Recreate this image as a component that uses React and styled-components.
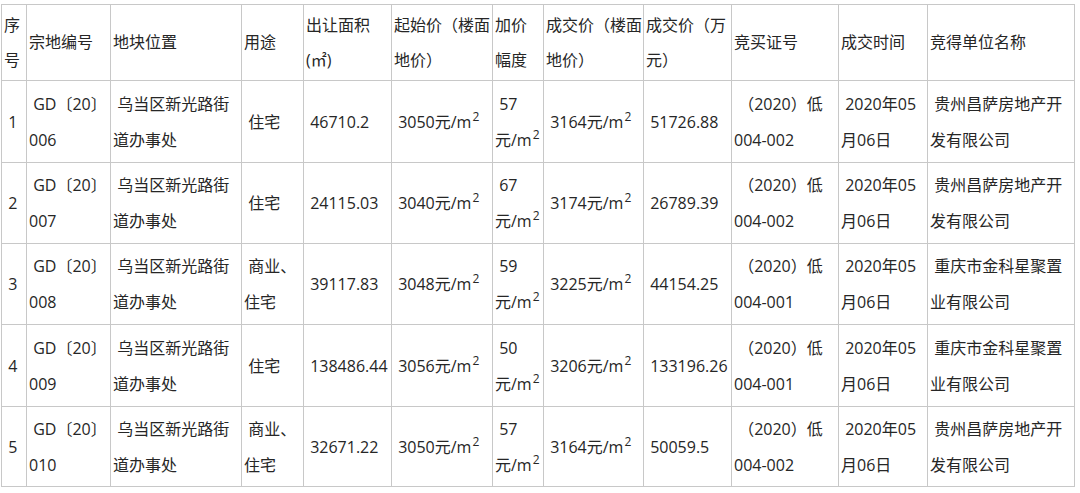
import React from "react";
import styled, { createGlobalStyle } from "styled-components";

const GlobalStyle = createGlobalStyle`
  html, body {
    margin: 0;
    padding: 0;
    background: #ffffff;
  }
  body {
    font-family: "Open Sans", "Noto Sans CJK SC", sans-serif;
    color: #262626;
  }
`;

const Page = styled.div`
  padding: 4px 0 0 1px;
  width: 1080px;
  box-sizing: border-box;
`;

const Table = styled.table`
  border-collapse: collapse;
  table-layout: fixed;
  width: 1074px;
  font-size: 16px;
  line-height: 36px;
  color: #262626;
`;

const Col = styled.col`
  width: ${(p) => p.$w}px;
`;

const Row = styled.tr`
  height: ${(p) => p.$h}px;
`;

const Cell = styled.td`
  border: 1px solid #c8c8c8;
  padding: 0 1px 0 2px;
  vertical-align: middle;
  text-align: left;
  white-space: pre-wrap;
  font-weight: normal;
  word-wrap: break-word;
`;

const HeadCell = styled(Cell).attrs({ as: "th" })`
  line-height: 35px;
`;

const Sup = styled.sup`
  font-size: 12px;
  line-height: 0;
  vertical-align: 7px;
  margin-left: 1px;
`;

const Price = ({ v }) => (
  <>
    {v}元/m<Sup>2</Sup>
  </>
);

const widths = [25, 84, 131, 62, 88, 101, 51, 100, 88, 107, 89, 147];

const headers = [
  "序号",
  "宗地编号",
  "地块位置",
  "用途",
  "出让面积(㎡)",
  "起始价（楼面地价）",
  "加价幅度",
  "成交价（楼面地价）",
  "成交价（万元）",
  "竞买证号",
  "成交时间",
  "竞得单位名称",
];

const rows = [
  {
    no: "1",
    code: "006",
    use: " 住宅",
    area: " 46710.2",
    start: " 3050",
    inc: " 57",
    deal: " 3164",
    total: " 51726.88",
    cert: "004-002",
    company: " 贵州昌萨房地产开发有限公司",
    h: 82,
  },
  {
    no: "2",
    code: "007",
    use: " 住宅",
    area: " 24115.03",
    start: " 3040",
    inc: " 67",
    deal: " 3174",
    total: " 26789.39",
    cert: "004-002",
    company: " 贵州昌萨房地产开发有限公司",
    h: 81,
  },
  {
    no: "3",
    code: "008",
    use: " 商业、住宅",
    area: " 39117.83",
    start: " 3048",
    inc: " 59",
    deal: " 3225",
    total: " 44154.25",
    cert: "004-001",
    company: " 重庆市金科星聚置业有限公司",
    h: 81,
  },
  {
    no: "4",
    code: "009",
    use: " 住宅",
    area: " 138486.44",
    start: " 3056",
    inc: " 50",
    deal: " 3206",
    total: " 133196.26",
    cert: "004-001",
    company: " 重庆市金科星聚置业有限公司",
    h: 82,
  },
  {
    no: "5",
    code: "010",
    use: " 商业、住宅",
    area: " 32671.22",
    start: " 3050",
    inc: " 57",
    deal: " 3164",
    total: " 50059.5",
    cert: "004-002",
    company: " 贵州昌萨房地产开发有限公司",
    h: 80,
  },
];

export default function App() {
  return (
    <Page>
      <GlobalStyle />
      <Table>
        <colgroup>
          {widths.map((w, i) => (
            <Col key={i} $w={w} />
          ))}
        </colgroup>
        <thead>
          <Row $h={76}>
            {headers.map((h) => (
              <HeadCell key={h}>{h}</HeadCell>
            ))}
          </Row>
        </thead>
        <tbody>
          {rows.map((r) => (
            <Row key={r.no} $h={r.h}>
              <Cell>{" " + r.no}</Cell>
              <Cell>{" GD〔20〕" + r.code}</Cell>
              <Cell>{" 乌当区新光路街道办事处"}</Cell>
              <Cell>{r.use}</Cell>
              <Cell>{r.area}</Cell>
              <Cell>
                <Price v={r.start} />
              </Cell>
              <Cell>
                {r.inc}
                元/m<Sup>2</Sup>
              </Cell>
              <Cell>
                <Price v={r.deal} />
              </Cell>
              <Cell>{r.total}</Cell>
              <Cell>{" （2020）低" + r.cert}</Cell>
              <Cell>{" 2020年05月06日"}</Cell>
              <Cell>{r.company}</Cell>
            </Row>
          ))}
        </tbody>
      </Table>
    </Page>
  );
}
